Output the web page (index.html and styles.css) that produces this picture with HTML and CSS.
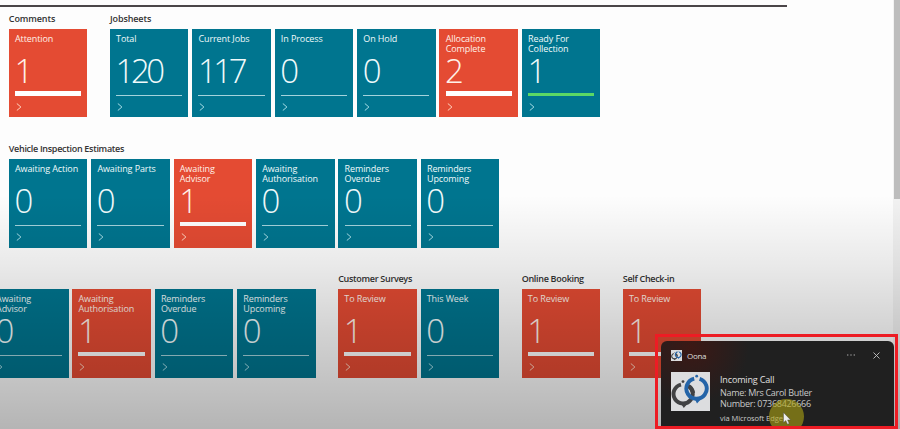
FILE: index.html
```
<!DOCTYPE html>
<html lang="en">
<head>
<meta charset="utf-8">
<title>Dashboard</title>
<link rel="stylesheet" href="styles.css">
</head>
<body>
<svg class="defs" aria-hidden="true">
  <symbol id="chev" viewBox="0 0 6 8"><path d="M.8 .5 4.9 4 .8 7.5" fill="none" stroke="currentColor" stroke-width="1"/></symbol>
  <symbol id="logo" viewBox="0 0 39 39">
    <rect width="39" height="39" fill="#dcdddf"/>
    <g fill="none" stroke-width="3.9">
      <path d="M10 12.6A9.6 9.6 0 1 0 15 12.8" stroke="#414244"/>
      <path d="M23.2 6.6A10.2 10.2 0 1 0 28.6 6.8" stroke="#2464a8"/>
      <path d="M18 14.4A9.6 9.6 0 0 1 22.2 21" stroke="#414244"/>
    </g>
    <path d="M9.5 31 12.8 36 17.5 30.5Z" fill="#414244"/>
    <path d="M23.5 26.5 26 31.5 31 26Z" fill="#2464a8"/>
    <circle cx="12" cy="9.6" r="1.4" fill="#414244"/>
    <circle cx="25.7" cy="4.2" r="1.4" fill="#2464a8"/>
  </symbol>
</svg>
<main class="page">
  <div class="rule"></div>
  <div class="row row-1">
    <section class="group"><h2>Comments</h2><div class="tiles">
      <a class="tile alert"><span class="label">Attention</span><b>1</b><i></i><svg><use href="#chev"/></svg></a>
    </div></section>
    <section class="group"><h2>Jobsheets</h2><div class="tiles">
      <a class="tile"><span class="label">Total</span><b>120</b><i></i><svg><use href="#chev"/></svg></a>
      <a class="tile"><span class="label">Current Jobs</span><b>117</b><i></i><svg><use href="#chev"/></svg></a>
      <a class="tile"><span class="label">In Process</span><b>0</b><i></i><svg><use href="#chev"/></svg></a>
      <a class="tile"><span class="label">On Hold</span><b>0</b><i></i><svg><use href="#chev"/></svg></a>
      <a class="tile alert"><span class="label">Allocation<br>Complete</span><b>2</b><i></i><svg><use href="#chev"/></svg></a>
      <a class="tile ready"><span class="label">Ready For<br>Collection</span><b>1</b><i></i><svg><use href="#chev"/></svg></a>
    </div></section>
  </div>
  <div class="row row-2">
    <section class="group"><h2>Vehicle Inspection Estimates</h2><div class="tiles">
      <a class="tile"><span class="label">Awaiting Action</span><b>0</b><i></i><svg><use href="#chev"/></svg></a>
      <a class="tile"><span class="label">Awaiting Parts</span><b>0</b><i></i><svg><use href="#chev"/></svg></a>
      <a class="tile alert"><span class="label">Awaiting<br>Advisor</span><b>1</b><i></i><svg><use href="#chev"/></svg></a>
      <a class="tile"><span class="label">Awaiting<br>Authorisation</span><b>0</b><i></i><svg><use href="#chev"/></svg></a>
      <a class="tile"><span class="label">Reminders<br>Overdue</span><b>0</b><i></i><svg><use href="#chev"/></svg></a>
      <a class="tile"><span class="label">Reminders<br>Upcoming</span><b>0</b><i></i><svg><use href="#chev"/></svg></a>
    </div></section>
  </div>
  <div class="row row-3">
    <section class="group"><h2></h2><div class="tiles">
      <a class="tile"><span class="label">Awaiting<br>Advisor</span><b>0</b><i></i><svg><use href="#chev"/></svg></a>
      <a class="tile alert"><span class="label">Awaiting<br>Authorisation</span><b>1</b><i></i><svg><use href="#chev"/></svg></a>
      <a class="tile"><span class="label">Reminders<br>Overdue</span><b>0</b><i></i><svg><use href="#chev"/></svg></a>
      <a class="tile"><span class="label">Reminders<br>Upcoming</span><b>0</b><i></i><svg><use href="#chev"/></svg></a>
    </div></section>
    <section class="group"><h2>Customer Surveys</h2><div class="tiles">
      <a class="tile alert"><span class="label">To Review</span><b>1</b><i></i><svg><use href="#chev"/></svg></a>
      <a class="tile"><span class="label">This Week</span><b>0</b><i></i><svg><use href="#chev"/></svg></a>
    </div></section>
    <section class="group"><h2>Online Booking</h2><div class="tiles">
      <a class="tile alert"><span class="label">To Review</span><b>1</b><i></i><svg><use href="#chev"/></svg></a>
    </div></section>
    <section class="group"><h2>Self Check-in</h2><div class="tiles">
      <a class="tile alert"><span class="label">To Review</span><b>1</b><i></i><svg><use href="#chev"/></svg></a>
    </div></section>
  </div>
</main>
<div class="scrollbar"><div class="thumb"></div></div>
<div class="shade"></div>
<aside class="frame">
  <div class="toast">
    <header>
      <svg class="app"><use href="#logo"/></svg>
      <span class="name">Oona</span>
      <svg class="more" viewBox="0 0 8 2"><path d="M0 .5h1.4v1H0zM3.3 .5h1.4v1H3.3zM6.6 .5H8v1H6.6z" fill="#aaa"/></svg>
      <svg class="close" viewBox="0 0 7 7"><path d="M.5 .5l6 6M6.5 .5l-6 6" stroke="#c4c4c4" stroke-width=".9"/></svg>
    </header>
    <div class="body">
      <svg class="picture"><use href="#logo"/></svg>
      <div class="text">
        <p class="title">Incoming Call</p>
        <p class="who">Name: Mrs Carol Butler</p>
        <p class="number">Number: 07368426666</p>
        <p class="via">via Microsoft Edge</p>
      </div>
    </div>
    <div class="spot"></div>
    <svg class="cursor" viewBox="0 0 8 13"><path d="M.5 .5v10l2.3-2 1.7 3.7 1.7-.8-1.6-3.5h3z" fill="#eee" stroke="#444" stroke-width=".4"/></svg>
  </div>
</aside>
</body>
</html>
```

FILE: styles.css
```
* { box-sizing: border-box; }
body {
  margin: 0;
  width: 900px;
  height: 429px;
  overflow: hidden;
  position: relative;
  display: flex;
  background: #fdfdfd;
  font-family: "Open Sans", "Noto Sans", sans-serif;
}
.defs { position: absolute; width: 0; height: 0; }
.page { width: 893px; height: 429px; overflow: hidden; flex: none; }
.rule { width: 787px; height: 1.5px; margin-top: 5px; background: #4b4648; }
.row { display: flex; gap: 22.5px; padding-left: 8.8px; }
.row-1 { margin-top: 5px; height: 130.5px; }
.row-2 { height: 130px; }
.row-3 { margin-left: -18.9px; }
.group { flex: none; }
h2 {
  margin: 0;
  height: 17px;
  font-size: 9px;
  line-height: 14px;
  font-weight: 600;
  letter-spacing: -.3px;
  color: #333;
  white-space: nowrap;
}
.row-1 h2 { letter-spacing: -.1px; }
.tiles { display: flex; gap: 3.8px; }
.tile {
  width: 78.6px;
  height: 88.5px;
  flex: none;
  padding: 5px 6.2px 0;
  background: #00758f;
  color: #f0fafb;
  display: flex;
  flex-direction: column;
}
.label {
  height: 21px;
  font-size: 9px;
  line-height: 10.3px;
  letter-spacing: -.1px;
  white-space: nowrap;
}
.tile b {
  height: 36px;
  font-size: 33px;
  line-height: 31px;
  font-weight: 300;
  letter-spacing: -3.4px;
  margin-left: -.6px;
}
.tile i { height: 1px; margin-top: 4px; background: #a4d3dc; }
.tile svg { width: 6px; height: 8px; margin: 7px 0 0 1px; color: #a5dce5; }
.alert { background: #e44b33; color: #fff1e9; }
.tile.alert i { height: 4.5px; margin-top: .5px; background: #fff; }
.alert svg { color: #ffd2be; }
.tile.ready i { height: 3px; margin-top: 2px; background: #5bd865; }
.scrollbar { width: 7px; height: 429px; background: #f2f2f2; flex: none; padding-left: 1px; }
.thumb { height: 199px; background: #bdbdbd; }
.shade {
  position: absolute;
  inset: 195px 0 0;
  background: linear-gradient(rgba(0,0,0,0), rgba(0,0,0,.08) 30%, rgba(0,0,0,.17) 58%, rgba(0,0,0,.285));
}
.frame {
  position: absolute;
  left: 655px;
  top: 334px;
  width: 243px;
  height: 95px;
  border: 3px solid #ed1c24;
  padding: 4.4px 0 0 3.4px;
  overflow: hidden;
}
.toast {
  position: relative;
  width: 233px;
  height: 90px;
  border-radius: 6px;
  background: radial-gradient(circle at 30px 6px, rgba(75,20,15,.65), transparent 58px), #202020;
  color: #c9c9c9;
  padding: 8px 14px 0 9.6px;
}
.toast header { display: flex; align-items: center; height: 12px; }
.app { width: 11px; height: 11px; }
.app use { transform: scale(1); }
.name { font-size: 8px; margin-left: 5px; flex: 1; color: #ddd; letter-spacing: -.3px; }
.more { width: 8px; height: 2px; }
.close { width: 7px; height: 7px; margin-left: 18px; }
.body { display: flex; gap: 10px; margin-top: 10.5px; }
.picture { width: 39px; height: 39px; }
.toast p { margin: 0; white-space: nowrap; font-size: 9px; line-height: 11px; letter-spacing: -.28px; }
.toast .title { color: #e0e0e0; line-height: 15px; letter-spacing: -.15px; }
.toast .via { font-size: 7.5px; margin-top: 4px; letter-spacing: -.05px; }
.spot {
  position: absolute;
  left: 108px;
  top: 58px;
  width: 35px;
  height: 35px;
  border-radius: 50%;
  background: rgba(175,165,20,.6);
}
.cursor { position: absolute; left: 122px; top: 71px; width: 8px; height: 13px; }
```
